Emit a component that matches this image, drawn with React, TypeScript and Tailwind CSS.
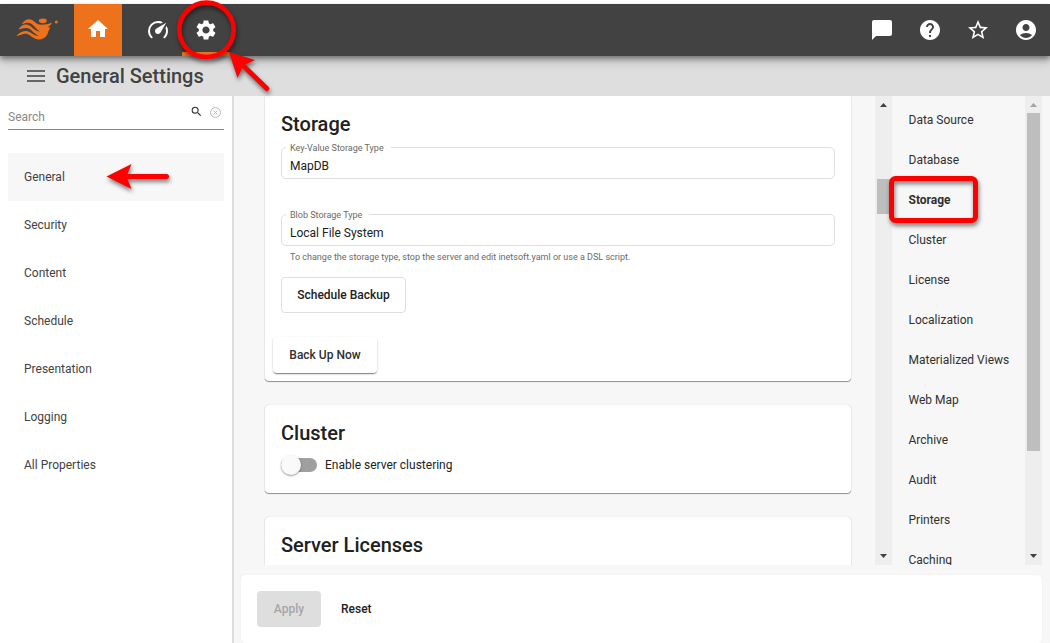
import React from "react";
import {
  MdHome,
  MdSettings,
  MdChatBubble,
  MdHelp,
  MdStarBorder,
  MdAccountCircle,
  MdMenu,
  MdSearch,
} from "react-icons/md";

const navItems = ["General", "Security", "Content", "Schedule", "Presentation", "Logging", "All Properties"];

const sections = [
  "Data Source",
  "Database",
  "Storage",
  "Cluster",
  "License",
  "Localization",
  "Materialized Views",
  "Web Map",
  "Archive",
  "Audit",
  "Printers",
  "Caching",
];

const cardShadow = "shadow-[0_1px_1px_0_rgba(0,0,0,0.4),0_0_1px_0_rgba(0,0,0,0.25)]";

function Logo() {
  return (
    <svg className="block h-[35px] w-[55px]" viewBox="0 0 55 35" fill="#ee711b">
      <ellipse cx="32.800" cy="10.800" rx="4" ry="2.400" />
      <circle cx="46.300" cy="12" r="1.500" />
      <path d="M12 14.200C14 9.500 19 8 22.500 10.200C25.500 12.800 28 14.800 31.500 14.800C36 14.800 38.500 14 42 12.800C41 15 39.500 16 38 17C38.500 17.500 39.500 17.500 40.500 17.500C38.500 20 38.500 22 37 25C35 28.500 31 30 27 29.200C22.500 28.500 20 24.500 16.500 23.800C13.500 23.200 10.500 25.300 6.300 26C9.500 22.500 13 20 17.500 21.200C22 22.500 24 26.300 29 25.800C24 24.500 22 19.500 18 18.300C14.500 17.400 12 19 8.500 19.600C10.500 15.500 15 13.500 19 15.200C22.500 17 25 21.500 30 21.500C26 19.500 24.500 15.500 20.500 13.300C17.500 12 15 13 12 14.200Z" />
    </svg>
  );
}

function Gauge() {
  return (
    <svg className="h-6 w-6" viewBox="0 0 24 24" fill="currentColor">
      <path d="M12,16A3,3 0 0,1 9,13C9,11.88 9.61,10.9 10.5,10.39L20.21,4.77L14.68,14.35C14.18,15.33 13.17,16 12,16M12,3C13.81,3 15.5,3.5 16.97,4.32L14.87,5.53C14,5.19 13,5 12,5A8,8 0 0,0 4,13C4,15.21 4.89,17.21 6.34,18.65H6.35C6.74,19.04 6.74,19.67 6.35,20.06C5.96,20.45 5.32,20.45 4.93,20.07V20.07C3.12,18.26 2,15.76 2,13A10,10 0 0,1 12,3M22,13C22,15.76 20.88,18.26 19.07,20.07V20.07C18.68,20.45 18.05,20.45 17.66,20.06C17.27,19.67 17.27,19.04 17.66,18.65V18.65C19.11,17.2 20,15.21 20,13C20,12 19.81,11 19.46,10.1L20.67,8C21.5,9.5 22,11.18 22,13Z" />
    </svg>
  );
}

function Header() {
  return (
    <header className="relative z-10 mt-1 flex h-[52px] shrink-0 items-stretch bg-[#424242] text-white shadow-[0_3px_5px_rgba(0,0,0,0.4),0_7px_9px_rgba(0,0,0,0.12)]">
      <div className="flex w-[74px] items-start pl-[10px] pt-[6px]">
        <Logo />
      </div>
      <div className="flex w-12 items-center justify-center bg-[#ee711b]">
        <MdHome size={24} className="-translate-y-px" />
      </div>
      <div className="flex w-12 items-center justify-center pl-6">
        <Gauge />
      </div>
      <div className="ml-3 flex w-12 items-center justify-center border-b-4 border-[#ee711b] pt-1">
        <MdSettings size={24} />
      </div>
      <div className="ml-auto flex items-center gap-6 pr-3">
        <MdChatBubble size={24} />
        <MdHelp size={24} />
        <MdStarBorder size={24} />
        <MdAccountCircle size={24} />
      </div>
    </header>
  );
}

function Sidebar() {
  return (
    <aside className="w-[234px] shrink-0 border-r-2 border-[#dedede] bg-white px-2">
      <div className="flex h-[34px] items-start border-b border-[#858585]">
        <span className="mt-3 grow text-[12px] leading-[18px] text-[#8a8a8a]">Search</span>
        <MdSearch size={13} className="mt-[9px] text-[#303030]" />
        <svg className="ml-[7px] mr-[3.500px] mt-[10.500px] h-[11px] w-[11px]" viewBox="0 0 10 10" fill="none" stroke="#b5b5b5" strokeWidth="0.900">
          <circle cx="5" cy="5" r="4.500" />
          <path d="M3.300 3.300l3.400 3.400M6.700 3.300l-3.400 3.400" />
        </svg>
      </div>
      <nav className="mt-[23px] w-[216px]">
        {navItems.map((item, i) => (
          <div key={item} className={`flex h-12 items-center pl-4 text-[12px] text-[#424242] ${i === 0 ? "bg-[#f7f7f7]" : ""}`}>
            {item}
          </div>
        ))}
      </nav>
    </aside>
  );
}

function OutlinedField({ label, value }: { label: string; value: string }) {
  return (
    <fieldset className="h-[38px] rounded-[5px] border border-[#dedede] pl-1">
      <legend className="ml-0 h-3 pl-1 pr-[7px] text-[9px] leading-[14px] text-[#6a6a6a]">{label}</legend>
      <div className="pl-1 text-[12px] leading-[27px] text-[#212121]">{value}</div>
    </fieldset>
  );
}

function StorageCard() {
  return (
    <section className={`h-[285px] shrink-0 rounded-b-[4px] bg-white px-4 pt-4 ${cardShadow}`}>
      <h2 className="text-[20px] font-medium leading-6 text-[#212121]">Storage</h2>
      <div className="mt-[5px]">
        <OutlinedField label="Key-Value Storage Type" value="MapDB" />
      </div>
      <div className="mt-[29px]">
        <OutlinedField label="Blob Storage Type" value="Local File System" />
      </div>
      <p className="ml-[9px] mt-1 text-[9px] leading-[14px] text-[#6a6a6a]">
        To change the storage type, stop the server and edit inetsoft.yaml or use a DSL script.
      </p>
      <button className="mt-[13px] block h-9 w-[125px] rounded-[4px] border border-[#dedede] text-[12px] font-medium text-[#212121]">
        Schedule Backup
      </button>
      <button className="-ml-2 mt-6 block h-9 w-[104px] rounded-[4px] bg-white text-[12px] font-medium text-[#303030] shadow-[0_2px_1px_-1px_rgba(0,0,0,0.3),0_1px_2px_rgba(0,0,0,0.3)]">
        Back Up Now
      </button>
    </section>
  );
}

function ClusterCard() {
  return (
    <section className={`h-[88px] shrink-0 rounded-[4px] bg-white px-4 pt-4 ${cardShadow}`}>
      <h2 className="text-[20px] font-medium leading-6 text-[#212121]">Cluster</h2>
      <div className="mt-[10px] flex h-5 items-center">
        <div className="flex h-[14px] w-9 items-center rounded-full bg-[#9f9f9f]">
          <div className="h-5 w-5 shrink-0 rounded-full bg-[#fafafa] shadow-[0_1px_2px_rgba(0,0,0,0.4)]" />
        </div>
        <span className="ml-2 text-[12px] text-[#212121]">Enable server clustering</span>
      </div>
    </section>
  );
}

function ScrollTrack({ thumb, upColor }: { thumb: string; upColor: string }) {
  return (
    <div className="flex w-[17px] shrink-0 flex-col items-center bg-[#eeeeee]">
      <svg className={`h-[17px] w-[17px] shrink-0 ${upColor}`} viewBox="0 0 17 17" fill="currentColor">
        <path d="M5 11L8.500 7L12 11Z" />
      </svg>
      <div className={`w-[13px] bg-[#bebebe] ${thumb}`} />
      <svg className="mt-auto h-[17px] w-[17px] shrink-0 text-[#404040]" viewBox="0 0 17 17" fill="currentColor">
        <path d="M5 6L8.500 10L12 6Z" />
      </svg>
    </div>
  );
}

function Annotations() {
  return (
    <svg
      className="pointer-events-none absolute left-0 top-0 z-20 h-[643px] w-[1050px] drop-shadow-[1px_3px_2px_rgba(0,0,0,0.5)]"
      viewBox="0 0 1050 643"
      fill="none"
    >
      <circle cx="206.500" cy="29.800" r="27.200" stroke="#fe0000" strokeWidth="4.600" />
      <path d="M266.800 88.500L242 64.500" stroke="#fe0000" strokeWidth="5" strokeLinecap="round" />
      <path d="M229 52L255 60L243.500 65.500L237.500 78Z" fill="#fe0000" />
      <path d="M166.500 176.500H125" stroke="#fe0000" strokeWidth="5" strokeLinecap="round" />
      <path d="M106.500 176.500L131.500 164L126.500 176.500L131.500 189Z" fill="#fe0000" />
      <rect x="891.500" y="178.500" width="84" height="42" rx="4" stroke="#fe0000" strokeWidth="5" />
    </svg>
  );
}

export default function App() {
  return (
    <div className="relative flex h-[643px] w-[1050px] flex-col overflow-hidden bg-white font-['Roboto',sans-serif]">
      <Header />
      <div className="flex h-10 shrink-0 items-center bg-[#dedede] pl-6 text-[#424242]">
        <MdMenu size={24} className="text-[#666]" />
        <h1 className="ml-2 text-[20px] font-medium leading-6">General Settings</h1>
      </div>
      <div className="flex min-h-0 grow bg-[#f7f7f7]">
        <Sidebar />
        <main className="flex min-w-0 grow flex-col pr-2">
          <div className="flex h-[469px] shrink-0 overflow-hidden">
            <div className="flex w-[641px] shrink-0 flex-col gap-6 pl-[31px] pr-6">
              <StorageCard />
              <ClusterCard />
              <section className={`h-[88px] shrink-0 rounded-[4px] bg-white px-4 pt-4 ${cardShadow}`}>
                <h2 className="text-[20px] font-medium leading-6 text-[#212121]">Server Licenses</h2>
              </section>
            </div>
            <ScrollTrack thumb="mt-[66px] h-[35px]" upColor="text-[#404040]" />
            <nav className="w-[133px] shrink-0 pl-[16.500px] pt-1">
              {sections.map((item) => (
                <div key={item} className={`flex h-10 items-center whitespace-nowrap text-[12px] text-[#303030] ${item === "Storage" ? "font-bold" : ""}`}>
                  {item}
                </div>
              ))}
            </nav>
            <ScrollTrack thumb="h-[338px]" upColor="text-[#a3a3a3]" />
          </div>
          <footer className="ml-[7px] mt-[10px] flex h-[68px] items-center rounded-[4px] bg-white pl-4 text-[12px] font-medium shadow-[0_0_1px_rgba(0,0,0,0.15)]">
            <button className="h-9 w-16 rounded-[4px] bg-[#dedede] text-[#a6a6a6]">Apply</button>
            <button className="ml-5 text-[#212121]">Reset</button>
          </footer>
        </main>
      </div>
      <Annotations />
    </div>
  );
}
